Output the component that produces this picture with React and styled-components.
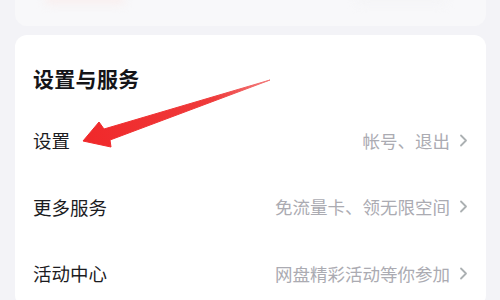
import React from 'react'
import styled, { createGlobalStyle } from 'styled-components'

const Global = createGlobalStyle`
  html, body {
    margin: 0;
    padding: 0;
    background: #f3f3f7;
  }
  body {
    font-family: "Noto Sans CJK SC", "Noto Sans", sans-serif;
    -webkit-font-smoothing: antialiased;
  }
`;

const Page = styled.div`
  position: relative;
  width: 500px;
  height: 300px;
  overflow: hidden;
  background: #f3f3f7;
  padding: 0 14px 0 15px;
  box-sizing: border-box;
  display: flex;
  flex-direction: column;
  gap: 9px;
`;

const PrevCard = styled.div`
  flex: none;
  height: 38px;
  margin-top: -12px;
  border-radius: 12px;
  background: #f8f8fa;
  display: flex;
  justify-content: space-between;
  padding: 0 40px 0 30px;
`;

const Blur = styled.div`
  width: ${p => p.$w}px;
  height: 10px;
  margin-top: 6px;
  border-radius: 6px;
  background: ${p => p.$c};
  filter: blur(5px);
`;

const Card = styled.div`
  background: #ffffff;
  border-radius: 12px;
  padding: 24px 18px 0 18px;
  flex: 1;
`;

const Title = styled.h2`
  margin: 0 0 10px 0;
  font-size: 21px;
  line-height: 38px;
  font-weight: 700;
  color: #151518;
  letter-spacing: 0.3px;
`;

const Row = styled.div`
  height: 66.5px;
  display: flex;
  align-items: center;
  justify-content: space-between;
`;

const Label = styled.span`
  font-size: 18.5px;
  color: #1c1c1f;
  font-weight: 400;
`;

const Hint = styled.span`
  display: flex;
  align-items: center;
  gap: 9px;
  font-size: 17.5px;
  color: #ababb2;
`;

const Arrow = styled.svg`
  position: absolute;
  left: 0;
  top: 0;
  pointer-events: none;
`;

const rows = [
  ['设置', '帐号、退出'],
  ['更多服务', '免流量卡、领无限空间'],
  ['活动中心', '网盘精彩活动等你参加'],
];

const Chevron = () => (
  <svg width="9" height="13" viewBox="0 0 9 13">
    <path d="M2 1.5 L7 6.5 L2 11.5" fill="none" stroke="#abb0b2" strokeWidth="1.8" strokeLinecap="round" strokeLinejoin="round" />
  </svg>
)

const App = () => {
  return (
    <>
      <Global />
      <Page>
        <PrevCard>
          <Blur $w={80} $c="#f9eeee" />
          <Blur $w={90} $c="#f4f4f6" />
        </PrevCard>
        <Card>
          <Title>设置与服务</Title>
          {rows.map(([label, hint]) => (
            <Row key={label}>
              <Label>{label}</Label>
              <Hint>{hint}<Chevron /></Hint>
            </Row>
          ))}
        </Card>
        <Arrow width="500" height="300" viewBox="0 0 500 300">
          <defs>
            <linearGradient id="ag" x1="83" y1="141" x2="270" y2="80" gradientUnits="userSpaceOnUse">
              <stop offset="0" stopColor="#f0282a" />
              <stop offset="0.7" stopColor="#ef3b3b" />
              <stop offset="1" stopColor="#f27a7a" />
            </linearGradient>
          </defs>
          <polygon
            points="83,141 99,122 104,129 270,80 110,140 111,147"
            fill="url(#ag)"
            stroke="url(#ag)"
            strokeWidth="1"
            strokeLinejoin="round"
          />
        </Arrow>
      </Page>
    </>
  )
}

export default App
